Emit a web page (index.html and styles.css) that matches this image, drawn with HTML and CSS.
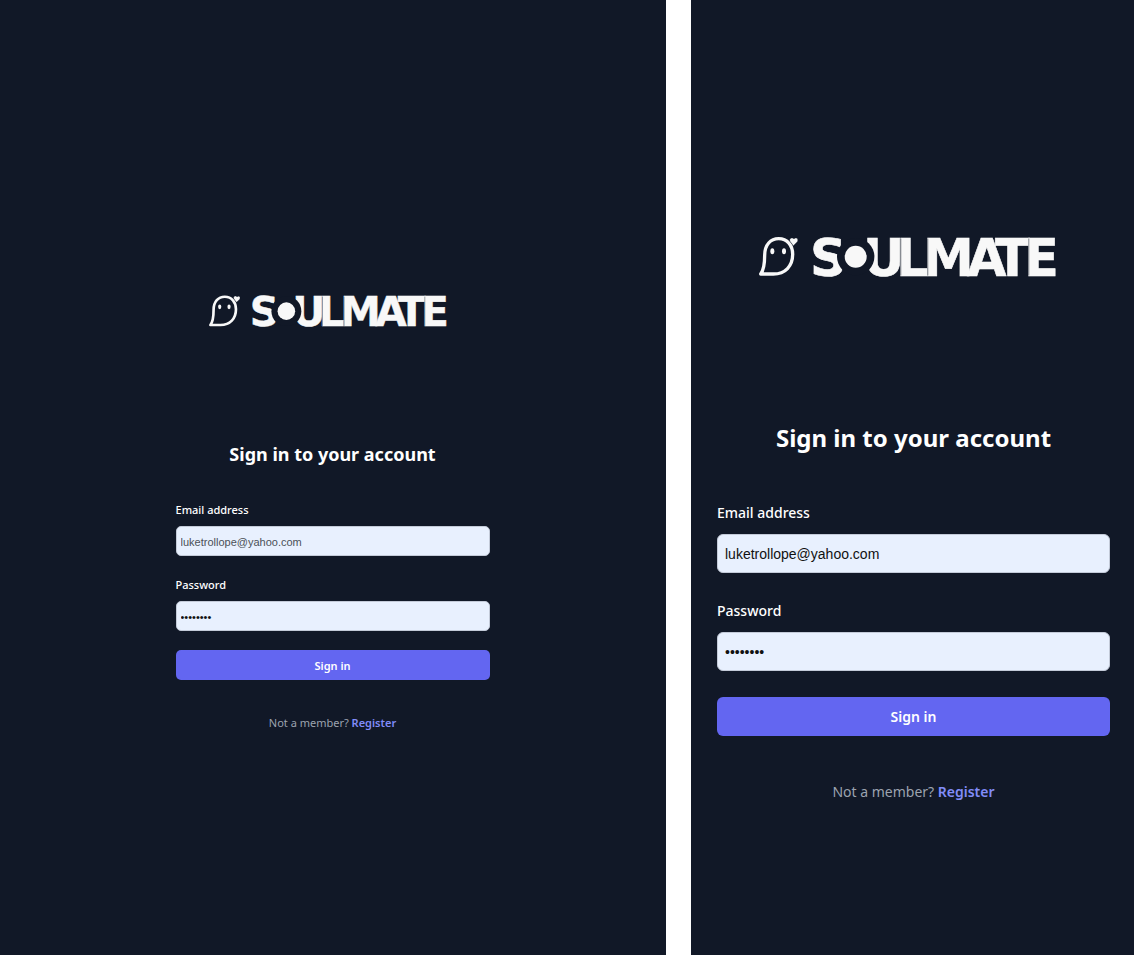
FILE: index.html
```html
<!DOCTYPE html>
<html lang="en">
<head>
<meta charset="utf-8">
<meta name="viewport" content="width=device-width, initial-scale=1">
<title>Soulmate – Sign in</title>
<link rel="stylesheet" href="styles.css">
</head>
<body>
<div class="screens">
  <main class="panel panel-small">
    <div class="content">
      <svg class="logo" viewBox="0 0 310 44" role="img" aria-label="Soulmate">
        <g transform="translate(-19 -14) scale(.33333)">
          <path class="logo-line" d="M62 162C71 151 74 132 74 106C74 74 92 56 116 56C142 56 158 76 158 103C158 138 136 162 100 162Z"/>
          <ellipse class="logo-fill" cx="97" cy="94" rx="6" ry="9"/>
          <ellipse class="logo-fill" cx="132" cy="94" rx="6" ry="9"/>
          <path class="logo-heart" d="M160 77L150 64C146 55 157 50 162 57C167 50 177 56 172 65Z"/>
        </g>
        <text class="logo-text" y="41.5" x="51 104 137 164 208 236 265">SULMATE</text>
        <path class="logo-seam" d="M141.8 4.5V41.5M168.8 4.5V41.5M269.8 4.5V41.5"/>
        <circle class="logo-ring" cx="96.7" cy="22.7" r="18.7"/>
        <circle class="logo-fill" cx="96.7" cy="22.7" r="11"/>
      </svg>
      <h1 class="title">Sign in to your account</h1>
      <form class="form">
        <div class="field">
          <label for="email-a">Email address</label>
          <input id="email-a" type="email" value="luketrollope@yahoo.com">
        </div>
        <div class="field">
          <label for="password-a">Password</label>
          <input id="password-a" type="password" value="password">
        </div>
        <button type="submit">Sign in</button>
      </form>
      <p class="footer">Not a member? <a href="#">Register</a></p>
    </div>
  </main>
  <section class="panel panel-large">
    <div class="content">
      <svg class="logo" viewBox="0 0 310 44" role="img" aria-label="Soulmate">
        <g transform="translate(-19 -14) scale(.33333)">
          <path class="logo-line" d="M62 162C71 151 74 132 74 106C74 74 92 56 116 56C142 56 158 76 158 103C158 138 136 162 100 162Z"/>
          <ellipse class="logo-fill" cx="97" cy="94" rx="6" ry="9"/>
          <ellipse class="logo-fill" cx="132" cy="94" rx="6" ry="9"/>
          <path class="logo-heart" d="M160 77L150 64C146 55 157 50 162 57C167 50 177 56 172 65Z"/>
        </g>
        <text class="logo-text" y="41.5" x="51 104 137 164 208 236 265">SULMATE</text>
        <path class="logo-seam" d="M141.8 4.5V41.5M168.8 4.5V41.5M269.8 4.5V41.5"/>
        <circle class="logo-ring" cx="96.7" cy="22.7" r="18.7"/>
        <circle class="logo-fill" cx="96.7" cy="22.7" r="11"/>
      </svg>
      <h1 class="title">Sign in to your account</h1>
      <form class="form">
        <div class="field">
          <label for="email-b">Email address</label>
          <input id="email-b" type="email" value="luketrollope@yahoo.com">
        </div>
        <div class="field">
          <label for="password-b">Password</label>
          <input id="password-b" type="password" value="password">
        </div>
        <button type="submit">Sign in</button>
      </form>
      <p class="footer">Not a member? <a href="#">Register</a></p>
    </div>
  </section>
</div>
</body>
</html>
```
FILE: styles.css
```css
* { box-sizing: border-box; }

body {
  margin: 0;
  background: #fff;
  font-family: "Noto Sans", "Open Sans", sans-serif;
}

.screens {
  display: grid;
  grid-template-columns: 666fr 443fr;
  gap: 25px;
  min-height: 100vh;
}

.panel { background: #111827; color: #fff; }

.panel-small {
  --logo: 248px;
  --title: 18px;
  --title-line: 26px;
  --title-gap: 113px;
  --form-gap: 33px;
  --text: 11px;
  --line: 20px;
  --label-gap: 6px;
  --input: 11px;
  --input-color: #4b5058;
  --control: 30px;
  --pad: 4px;
  --row-gap: 19px;
  --footer-gap: 33px;
  --radius: 5px;
  padding: 293px 25px 0 24px;
}

.panel-large {
  --logo: 310px;
  --title: 24px;
  --title-line: 32px;
  --title-gap: 144px;
  --form-gap: 47px;
  --text: 14px;
  --line: 24px;
  --label-gap: 9px;
  --input: 14px;
  --input-color: #111;
  --control: 39px;
  --pad: 7px;
  --row-gap: 26px;
  --footer-gap: 44px;
  --radius: 6px;
  padding: 234px 24px 0 26px;
}

.content {
  display: flex;
  flex-direction: column;
  margin: 0 auto;
}

.panel-small .content { max-width: 314px; }

.logo { width: var(--logo); max-width: 100%; align-self: center; overflow: visible; }

.logo-text {
  font: bold 51px "DejaVu Sans", sans-serif;
  fill: #f8f8f8;
  stroke: #f8f8f8;
  stroke-width: .6px;
}
.logo-seam { stroke: #111827; stroke-width: .5px; }
.logo-fill { fill: #f8f8f8; }
.logo-ring { fill: #111827; }
.logo-line { fill: none; stroke: #f8f8f8; stroke-width: 10px; stroke-linejoin: round; }
.logo-heart { fill: #f8f8f8; stroke: #111827; stroke-width: 1px; }

.title {
  margin: var(--title-gap) 0 0;
  font-size: var(--title);
  line-height: var(--title-line);
  font-weight: 700;
  text-align: center;
}

.form {
  display: flex;
  flex-direction: column;
  gap: var(--row-gap);
  margin-top: var(--form-gap);
}

.field { display: flex; flex-direction: column; gap: var(--label-gap); }

label { font-size: var(--text); line-height: var(--line); font-weight: 500; }

input {
  width: 100%;
  height: var(--control);
  padding: 1px var(--pad) 0;
  border: 1px solid #c3cad8;
  border-radius: var(--radius);
  background: #e8f0fe;
  color: var(--input-color);
  font: var(--input) "Liberation Sans", Arial, sans-serif;
}

input[type="password"] { color: #111; }

button {
  height: var(--control);
  padding: 0;
  border: 0;
  border-radius: var(--radius);
  background: #6366f1;
  color: #fff;
  font: 600 var(--text) "Noto Sans", "Open Sans", sans-serif;
}

.footer {
  margin: var(--footer-gap) 0 0;
  font-size: var(--text);
  line-height: var(--line);
  text-align: center;
  color: #9ca3af;
}

.footer a { color: #818cf8; font-weight: 600; text-decoration: none; }
```
